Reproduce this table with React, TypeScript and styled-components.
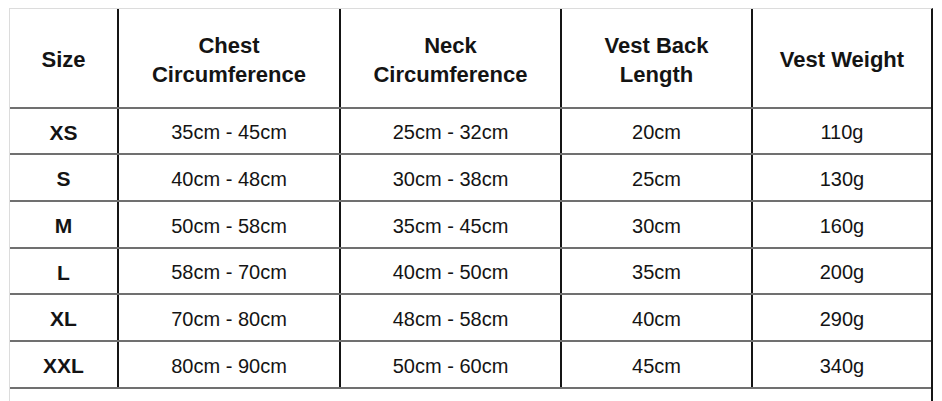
import React from "react";
import styled, { createGlobalStyle } from "styled-components";

type SizeRow = {
  size: string;
  chest: string;
  neck: string;
  back: string;
  weight: string;
};

const headers: string[][] = [
  ["Size"],
  ["Chest", "Circumference"],
  ["Neck", "Circumference"],
  ["Vest Back", "Length"],
  ["Vest Weight"],
];

const rows: SizeRow[] = [
  { size: "XS", chest: "35cm - 45cm", neck: "25cm - 32cm", back: "20cm", weight: "110g" },
  { size: "S", chest: "40cm - 48cm", neck: "30cm - 38cm", back: "25cm", weight: "130g" },
  { size: "M", chest: "50cm - 58cm", neck: "35cm - 45cm", back: "30cm", weight: "160g" },
  { size: "L", chest: "58cm - 70cm", neck: "40cm - 50cm", back: "35cm", weight: "200g" },
  { size: "XL", chest: "70cm - 80cm", neck: "48cm - 58cm", back: "40cm", weight: "290g" },
  { size: "XXL", chest: "80cm - 90cm", neck: "50cm - 60cm", back: "45cm", weight: "340g" },
];

export default function App() {
  return (
    <>
      <GlobalStyle />
      <Page>
        <Frame>
          <HeaderRow>
            {headers.map((lines, i) => (
              <HeaderCell key={i}>
                {lines.map((line) => (
                  <span key={line}>{line}</span>
                ))}
              </HeaderCell>
            ))}
          </HeaderRow>
          {rows.map((row) => (
            <BodyRow key={row.size}>
              <Cell $bold>{row.size}</Cell>
              <Cell>{row.chest}</Cell>
              <Cell>{row.neck}</Cell>
              <Cell>{row.back}</Cell>
              <Cell>{row.weight}</Cell>
            </BodyRow>
          ))}
        </Frame>
      </Page>
    </>
  );
}

const GlobalStyle = createGlobalStyle`
  html, body {
    margin: 0;
    padding: 0;
    height: 100%;
    background: #ffffff;
    overflow: hidden;
  }
  body {
    font-family: "Liberation Sans", Arial, sans-serif;
    color: #141414;
  }
`;

const Page = styled.div`
  padding: 8px 0 0 9px;
  width: 924px;
`;

const Frame = styled.div`
  border-top: 1px solid #dcdcdc;
  border-left: 1px solid #dcdcdc;
  border-right: 2px solid #151515;
  height: 400px;
`;

// track widths include each cell's 2px right rule
const columns = "109px 222px 221px 191px 178px";

const HeaderRow = styled.div`
  display: grid;
  grid-template-columns: ${columns};
  height: 98px;
  border-bottom: 2px solid #707070;
`;

const BodyRow = styled.div`
  display: grid;
  grid-template-columns: ${columns};
  height: 45px;
  border-bottom: 2px solid #707070;

  &:nth-child(3n + 2) {
    height: 44px;
  }
`;

const HeaderCell = styled.div`
  display: flex;
  flex-direction: column;
  align-items: center;
  justify-content: center;
  padding-top: 4px;
  font-size: 22px;
  font-weight: 700;
  line-height: 29.5px;
  text-align: center;
  border-right: 2px solid #151515;

  &:last-child {
    border-right: none;
  }
`;

const Cell = styled.div<{ $bold?: boolean }>`
  display: flex;
  align-items: center;
  justify-content: center;
  padding-top: 3px;
  font-size: ${(p) => (p.$bold ? "21px" : "20px")};
  font-weight: ${(p) => (p.$bold ? 700 : 400)};
  border-right: 2px solid #151515;

  &:last-child {
    border-right: none;
  }
`;
